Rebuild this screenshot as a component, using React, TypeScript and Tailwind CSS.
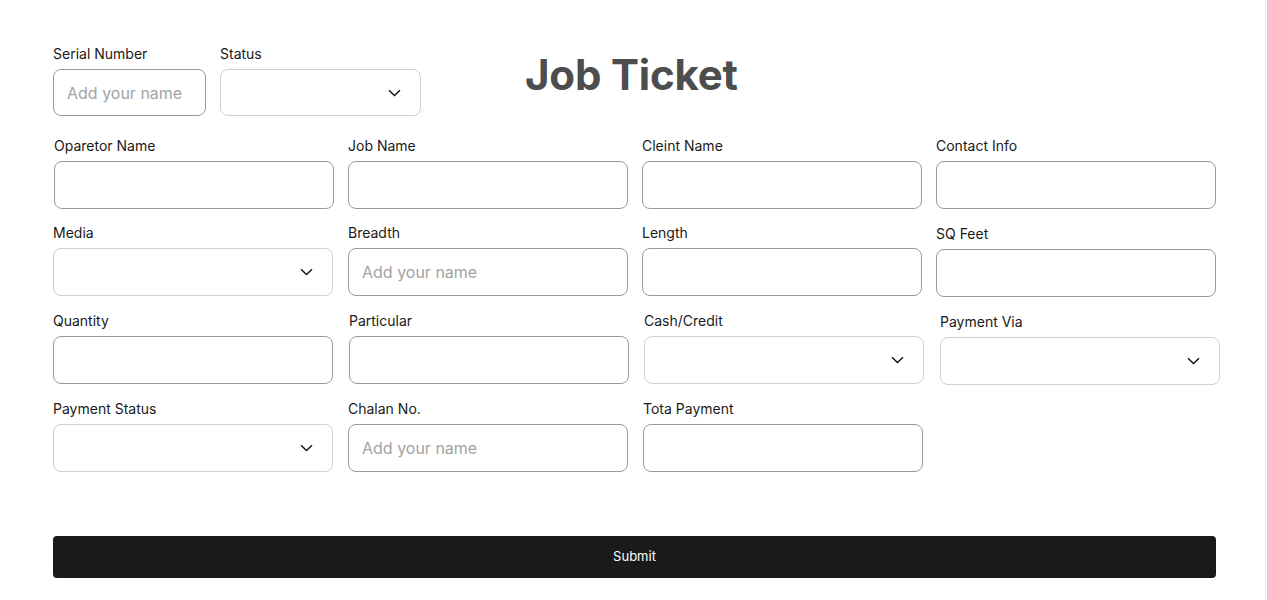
import React from "react";

type FieldProps = {
  label: string;
  kind?: "text" | "select";
  placeholder?: string;
  className?: string;
  boxHeight?: string;
};

function Chevron() {
  return (
    <svg width="13" height="8" viewBox="0 0 13 8" fill="none" className="shrink-0">
      <path d="M1 1.2L6.5 6.5L12 1.2" stroke="#111" strokeWidth="1.4" />
    </svg>
  );
}

function Field({ label, kind = "text", placeholder, className = "", boxHeight = "h-[48px]" }: FieldProps) {
  return (
    <div className={`flex flex-col ${className}`}>
      <label className="h-[20px] text-[14px] leading-[20px] text-[#1a1a1a]">{label}</label>
      {kind === "select" ? (
        <div
          className={`mt-[5px] flex items-center justify-end rounded-[8px] border border-[#cfcfcf] bg-white pr-[19px] ${boxHeight}`}
        >
          <Chevron />
        </div>
      ) : (
        <input
          placeholder={placeholder}
          className={`mt-[5px] rounded-[8px] border border-[#9a9a9a] bg-white px-[13px] text-[16px] text-[#1a1a1a] outline-none placeholder:text-[#a3a3a3] ${boxHeight}`}
        />
      )}
    </div>
  );
}

export default function App() {
  return (
    <div
      className="h-[600px] w-[1266px] border-r border-[#e8e8e8] bg-white"
      style={{ fontFamily: "Inter, 'Noto Sans', sans-serif" }}
    >
      <div className="flex flex-col pt-[44px]">
        {/* Header row */}
        <div className="flex items-start">
          <Field label="Serial Number" placeholder="Add your name" className="ml-[53px] w-[153px]" boxHeight="h-[47px]" />
          <Field label="Status" kind="select" className="ml-[14px] w-[201px]" boxHeight="h-[47px]" />
          <h1 className="ml-[104px] mt-[3px] text-[42px] font-bold leading-[56px] tracking-[-0.2px] text-[#4d4d4d]">
            Job Ticket
          </h1>
        </div>

        {/* Row 2 */}
        <div className="mt-[20px] flex items-start">
          <Field label="Oparetor Name" className="ml-[54px] w-[280px]" />
          <Field label="Job Name" className="ml-[14px] w-[280px]" />
          <Field label="Cleint Name" className="ml-[14px] w-[280px]" />
          <Field label="Contact Info" className="ml-[14px] w-[280px]" />
        </div>

        {/* Row 3 */}
        <div className="mt-[14px] flex items-start">
          <Field label="Media" kind="select" className="ml-[53px] w-[280px]" />
          <Field label="Breadth" placeholder="Add your name" className="ml-[15px] w-[280px]" />
          <Field label="Length" className="ml-[14px] w-[280px]" />
          <Field label="SQ Feet" className="-mb-[1px] ml-[14px] mt-[1px] w-[280px]" />
        </div>

        {/* Row 4 */}
        <div className="mt-[15px] flex items-start">
          <Field label="Quantity" className="ml-[53px] w-[280px]" />
          <Field label="Particular" className="ml-[16px] w-[280px]" />
          <Field label="Cash/Credit" kind="select" className="ml-[15px] w-[280px]" />
          <Field label="Payment Via" kind="select" className="-mb-[1px] ml-[16px] mt-[1px] w-[280px]" />
        </div>

        {/* Row 5 */}
        <div className="mt-[15px] flex items-start">
          <Field label="Payment Status" kind="select" className="ml-[53px] w-[280px]" />
          <Field label="Chalan No." placeholder="Add your name" className="ml-[15px] w-[280px]" />
          <Field label="Tota Payment" className="ml-[15px] w-[280px]" />
        </div>

        <button className="ml-[53px] mt-[64px] h-[42px] w-[1163px] rounded-[4px] bg-[#1a1a1a] text-[13px] text-white">
          Submit
        </button>
      </div>
    </div>
  );
}
